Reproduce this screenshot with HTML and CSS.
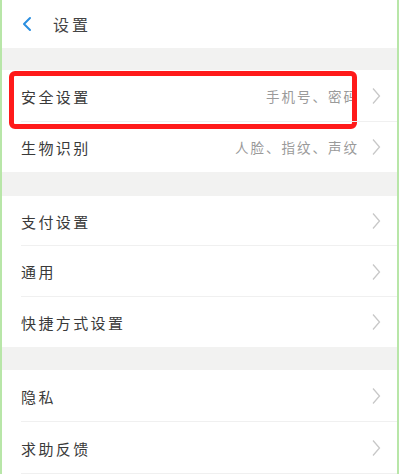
FILE: index.html
```html
<!DOCTYPE html>
<html lang="zh-CN">
<head>
<meta charset="utf-8">
<link rel="stylesheet" href="styles.css">
</head>
<body>
<div class="page">
  <header class="header">
    <svg class="back" width="12" height="16" viewBox="0 0 12 16"><path d="M9 2 L3 8 L9 14" fill="none" stroke="#2a8ee0" stroke-width="2" stroke-linecap="round" stroke-linejoin="round"/></svg>
    <span class="title">设置</span>
  </header>
  <div class="gap g1"></div>
  <section class="group">
    <div class="row r1 highlight">
      <span class="label">安全设置</span>
      <span class="sub">手机号、密码</span>
      <svg class="chev" width="10" height="18" viewBox="0 0 10 18"><path d="M2 1.5 L8.5 9 L2 16.5" fill="none" stroke="#c8c8c8" stroke-width="1.3"/></svg>
      <span class="redbox"></span>
    </div>
    <div class="row r2">
      <span class="label">生物识别</span>
      <span class="sub">人脸、指纹、声纹</span>
      <svg class="chev" width="10" height="18" viewBox="0 0 10 18"><path d="M2 1.5 L8.5 9 L2 16.5" fill="none" stroke="#c8c8c8" stroke-width="1.3"/></svg>
    </div>
  </section>
  <div class="gap g2"></div>
  <section class="group">
    <div class="row r3">
      <span class="label">支付设置</span>
      <svg class="chev" width="10" height="18" viewBox="0 0 10 18"><path d="M2 1.5 L8.5 9 L2 16.5" fill="none" stroke="#c8c8c8" stroke-width="1.3"/></svg>
    </div>
    <div class="row r4">
      <span class="label">通用</span>
      <svg class="chev" width="10" height="18" viewBox="0 0 10 18"><path d="M2 1.5 L8.5 9 L2 16.5" fill="none" stroke="#c8c8c8" stroke-width="1.3"/></svg>
    </div>
    <div class="row r5">
      <span class="label">快捷方式设置</span>
      <svg class="chev" width="10" height="18" viewBox="0 0 10 18"><path d="M2 1.5 L8.5 9 L2 16.5" fill="none" stroke="#c8c8c8" stroke-width="1.3"/></svg>
    </div>
  </section>
  <div class="gap g3"></div>
  <section class="group">
    <div class="row r6">
      <span class="label">隐私</span>
      <svg class="chev" width="10" height="18" viewBox="0 0 10 18"><path d="M2 1.5 L8.5 9 L2 16.5" fill="none" stroke="#c8c8c8" stroke-width="1.3"/></svg>
    </div>
    <div class="row r7">
      <span class="label">求助反馈</span>
      <svg class="chev" width="10" height="18" viewBox="0 0 10 18"><path d="M2 1.5 L8.5 9 L2 16.5" fill="none" stroke="#c8c8c8" stroke-width="1.3"/></svg>
    </div>
  </section>
</div>
</body>
</html>
```
FILE: styles.css
```css
html, body {
  margin: 0;
  padding: 0;
  background: #ffffff;
}
body {
  width: 400px;
  height: 474px;
  overflow: hidden;
  font-family: "Noto Sans CJK SC", "Noto Sans", sans-serif;
}
.page {
  width: 399px;
  height: 474px;
  box-sizing: border-box;
  border-left: 2px solid #b8e6a8;
  border-right: 2px solid #b8e6a8;
  background: #ffffff;
  overflow: hidden;
}
.header {
  height: 48px;
  display: flex;
  align-items: center;
  padding-left: 19px;
  box-sizing: border-box;
}
.back {
  display: block;
}
.title {
  margin-left: 20px;
  font-size: 16px;
  color: #444;
  letter-spacing: 3px;
}
.gap {
  background: #f2f2f1;
}
.g1 { height: 22px; }
.g2 { height: 24px; }
.g3 { height: 23px; }
.group {
  background: #ffffff;
}
.row {
  position: relative;
  display: flex;
  align-items: center;
  padding-left: 19px;
  padding-right: 16px;
  box-sizing: border-box;
  height: 51px;
}
.row::after {
  content: "";
  position: absolute;
  left: 19px;
  right: 0;
  bottom: 0;
  height: 1px;
  background: #f0f0f0;
}
.r1 { height: 52px; }
.r2 { height: 50px; }
.r2::after, .r5::after { display: none; }
.r3 { height: 50px; }
.r5 { height: 50px; }
.r6 { height: 52px; }
.r7 { height: 52px; }
.label {
  font-size: 15px;
  color: #3a3a3a;
  letter-spacing: 2.4px;
  flex: 1;
}
.sub {
  font-size: 13.5px;
  color: #9a9a9a;
  letter-spacing: 2px;
  margin-right: 12px;
}
.chev {
  display: block;
}
.redbox {
  position: absolute;
  left: 7px;
  top: 1px;
  width: 348px;
  height: 58px;
  box-sizing: border-box;
  border: 5px solid #ff1a1a;
  border-radius: 6px;
}
```
